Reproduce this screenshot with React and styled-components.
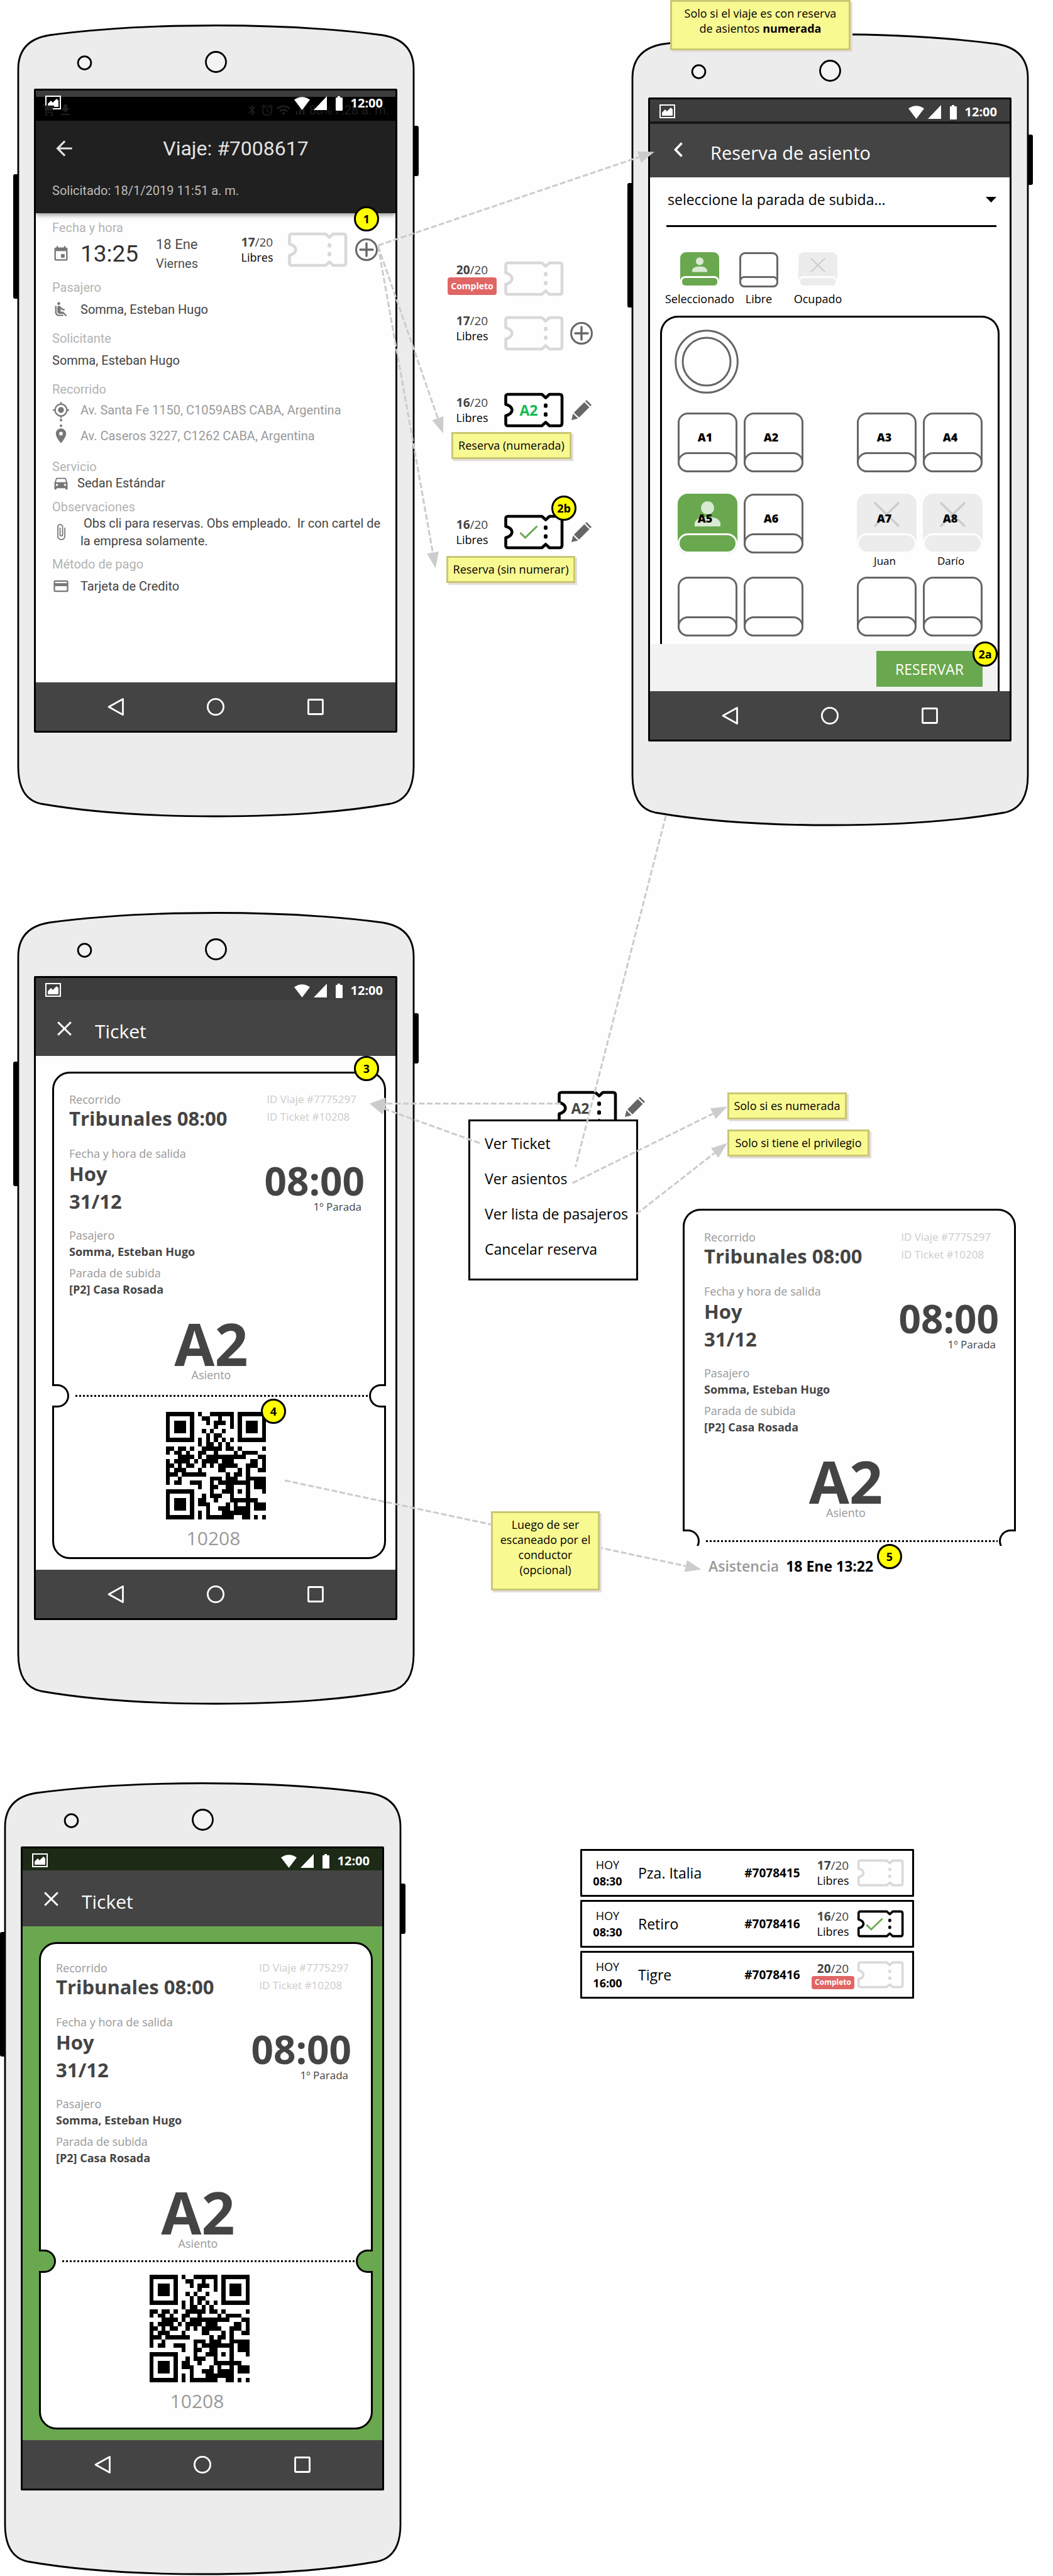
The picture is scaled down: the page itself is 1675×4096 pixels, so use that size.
import React from "react";
import styled, { createGlobalStyle, css } from "styled-components";
import {
  MdEvent,
  MdAirlineSeatReclineNormal,
  MdMyLocation,
  MdPlace,
  MdDirectionsCar,
  MdAttachFile,
  MdCreditCard,
  MdArrowBack,
  MdBluetooth,
  MdAlarm,
  MdWifi,
  MdSignalCellularAlt,
  MdFileDownload,
  MdShoppingCart,
} from "react-icons/md";

const GREEN = "#6aa84f";
const INK = "#444444";
const SANS = '"Open Sans", "Noto Sans", sans-serif';
const ROBOTO = 'Roboto, "Noto Sans", sans-serif';

const GlobalStyle = createGlobalStyle`
  *, *::before, *::after { box-sizing: border-box; }
  body { margin: 0; background: #fefefe; font-family: ${SANS}; color: #000; }
  button, select { font: inherit; color: inherit; margin: 0; padding: 0; border: 0; background: none; }
  h1, h2, p, ul, dl, dd, dt { margin: 0; padding: 0; font-weight: inherit; font-size: inherit; }
  ul { list-style: none; }
  svg { display: block; }
`;

/* ---------- board ---------- */

const Board = styled.main`
  position: relative;
  padding-bottom: 1px;
`;

const Section = styled.section`
  display: grid;
  align-items: start;
  padding: ${(p) => p.$pad};
  grid-template-columns: ${(p) => p.$cols};
`;

const Overlay = styled.svg`
  position: absolute;
  inset: 0;
  width: 100%;
  height: 100%;
  z-index: 1;
  pointer-events: none;
`;

const Note = styled.p`
  position: relative;
  z-index: 2;
  width: ${(p) => p.$w}px;
  min-height: ${(p) => p.$h || 43}px;
  margin-left: ${(p) => p.$left || 0}px;
  margin-top: ${(p) => p.$top || 0}px;
  padding: 6px 0;
  border: 3px solid #c9c772;
  background: #f9f992;
  box-shadow: 3px 3px 0 #e5dcdf;
  font-size: 18px;
  line-height: 24px;
  text-align: center;
  white-space: nowrap;
`;

const Badge = styled.span`
  position: absolute;
  z-index: 3;
  left: ${(p) => p.$x}px;
  top: ${(p) => p.$y}px;
  display: grid;
  place-items: center;
  width: 40px;
  height: 40px;
  border: 3px solid #000;
  border-radius: 50%;
  background: #ffff00;
  color: #000;
  font-size: 18px;
  font-weight: 700;
  line-height: 20px;
`;

function Link({ from, to, head = true }) {
  const dx = to[0] - from[0];
  const dy = to[1] - from[1];
  const len = Math.hypot(dx, dy);
  const ux = dx / len;
  const uy = dy / len;
  const bx = to[0] - ux * 32;
  const by = to[1] - uy * 32;
  const end = head ? [bx, by] : to;
  return (
    <g>
      <line x1={from[0]} y1={from[1]} x2={end[0]} y2={end[1]} stroke="#cccccc" strokeWidth="3.8" strokeDasharray="11.500 4.500" />
      {head && (
        <polygon
          points={`${to[0]},${to[1]} ${bx - uy * 12},${by + ux * 12} ${bx + uy * 12},${by - ux * 12}`}
          fill="#cccccc"
        />
      )}
    </g>
  );
}

function Links() {
  return (
    <Overlay viewBox="0 0 2108 5154" preserveAspectRatio="none" aria-hidden="true">
      <Link from={[757, 491]} to={[1310, 304]} />
      <Link from={[757, 493]} to={[887, 867]} />
      <Link from={[757, 493]} to={[872, 1137]} />
      <Link from={[1333, 1632]} to={[1152, 2335]} head={false} />
      <Link from={[1122, 2208]} to={[740, 2208]} />
      <Link from={[960, 2287]} to={[740, 2208]} />
      <Link from={[1146, 2367]} to={[1456, 2214]} />
      <Link from={[1274, 2429]} to={[1456, 2287]} />
      <Link from={[570, 2962]} to={[1404, 3140]} />
    </Overlay>
  );
}

/* ---------- phone ---------- */

const PhoneBox = styled.article`
  position: relative;
  height: 1261px;
  margin-top: ${(p) => p.$top || 0}px;
  padding: 102px 34px 135px 33px;
`;

const Frame = styled.svg`
  position: absolute;
  inset: 0;
  width: 100%;
  height: 100%;
`;

const Screen = styled.div`
  position: relative;
  display: flex;
  flex-direction: column;
  height: 1024px;
  border: 3px solid #000;
  border-radius: 2px;
  background: ${(p) => p.$bg || "#fefefe"};
  overflow: hidden;
`;

const StatusBar = styled.div`
  position: relative;
  display: flex;
  align-items: flex-start;
  height: ${(p) => (p.$tall ? 48 : 35)}px;
  padding: 8px 20px 0 15px;
  background: ${(p) => p.$bg || "#3d3d3d"};
  color: #fff;
`;

const StatusRight = styled.div`
  position: relative;
  display: flex;
  align-items: center;
  gap: 6px;
  margin-left: auto;
  height: 24px;
`;

const Clock = styled.time`
  font-size: 20px;
  font-weight: 700;
  line-height: 24px;
`;

const Ghost = styled.div`
  position: absolute;
  left: 10px;
  right: 10px;
  bottom: 5px;
  display: flex;
  align-items: center;
  gap: 3px;
  color: #1f1f1f;
  font-family: ${ROBOTO};
  font-size: 20px;
  line-height: 24px;
`;

const GhostSpacer = styled.span`
  flex: 1;
`;

const AppBar = styled.header`
  display: flex;
  align-items: center;
  height: 89px;
  padding-top: 9px;
  background: #444444;
  color: #fff;
  ${(p) =>
    p.$ruled &&
    css`
      border-top: 4px solid #161616;
      padding-top: 5px;
    `}
`;

const BarButton = styled.button`
  display: grid;
  place-items: center;
  width: 90px;
  height: 80px;
  padding-bottom: 8px;
`;

const BarTitle = styled.h1`
  padding: 2px 0 0 ${(p) => (p.$wide ? 4 : 6)}px;
  font-size: ${(p) => (p.$wide ? 30 : 29)}px;
  line-height: 40px;
`;

const NavBar = styled.nav`
  display: flex;
  justify-content: center;
  align-items: center;
  gap: 131px;
  flex: none;
  height: 77px;
  background: #444444;
`;

const NavButton = styled.button`
  width: 28px;
  height: 28px;
`;

function PhoneFrame() {
  return (
    <Frame viewBox="0 0 645 1261" preserveAspectRatio="none" aria-hidden="true">
      <rect x="0" y="238" width="12" height="198" rx="3" />
      <rect x="633" y="161" width="12" height="80" rx="3" />
      <path
        d="M8 71 C8 38 27 22 57 17 C140 6 230 1.5 322.5 1.5 C415 1.5 505 6 588 17 C618 22 637 38 637 71 V1180 C637 1215 624 1234 600 1239 C515 1254 420 1259 322.5 1259 C225 1259 130 1254 44 1239 C21 1234 8 1215 8 1180 Z"
        fill="#ececec"
        stroke="#000"
        strokeWidth="2.8"
      />
      <circle cx="113.500" cy="61" r="10.400" fill="#fefefe" fillOpacity="0.4" stroke="#000" strokeWidth="2.8" />
      <circle cx="322.500" cy="59.500" r="16" fill="#fefefe" fillOpacity="0.4" stroke="#000" strokeWidth="2.8" />
    </Frame>
  );
}

function StatusIcons() {
  return (
    <>
      <svg width="25" height="22" viewBox="0 0 25 22" aria-hidden="true">
        <rect x="1" y="1" width="23" height="20" fill="none" stroke="#fff" strokeWidth="2" />
        <path d="M4 18 V13 L9 8 L12 11 L18 5 L21 8 V18 Z" fill="#fff" />
      </svg>
      <StatusRight>
        <svg width="25" height="21" viewBox="0 0 25 21" aria-hidden="true">
          <path d="M0 4.500 Q12.500 -4 25 4.500 L12.500 21 Z" fill="#fff" />
        </svg>
        <svg width="21" height="22" viewBox="0 0 21 22" aria-hidden="true">
          <path d="M0 22 L21 0 V22 Z" fill="#fff" />
        </svg>
        <svg width="26" height="23" viewBox="0 0 26 23" aria-hidden="true">
          <path d="M11 0 H15 V2 H18 Q19 2 19 3 V22 Q19 23 18 23 H9 Q8 23 8 22 V3 Q8 2 9 2 H11 Z" fill="#fff" />
        </svg>
        <Clock>12:00</Clock>
      </StatusRight>
    </>
  );
}

function AndroidNav() {
  return (
    <NavBar>
      <NavButton aria-label="Atrás">
        <svg width="28" height="28" viewBox="0 0 28 28">
          <path d="M3 14 L25.500 1.500 V26.500 Z" fill="none" stroke="#fff" strokeWidth="2.8" strokeLinejoin="round" />
        </svg>
      </NavButton>
      <NavButton aria-label="Inicio">
        <svg width="28" height="28" viewBox="0 0 28 28">
          <circle cx="14" cy="14" r="12.600" fill="none" stroke="#fff" strokeWidth="2.8" />
        </svg>
      </NavButton>
      <NavButton aria-label="Recientes">
        <svg width="28" height="28" viewBox="0 0 28 28">
          <rect x="2.500" y="2.500" width="23" height="23" rx="1" fill="none" stroke="#fff" strokeWidth="2.8" />
        </svg>
      </NavButton>
    </NavBar>
  );
}

/* ---------- small drawings ---------- */

function TicketIcon({ color = "#d9d9d9", width = 96, height = 56 }) {
  return (
    <svg width={width} height={height} viewBox="0 0 96 56" preserveAspectRatio="none" aria-hidden="true">
      <path
        d="M7 3 H61 L67 8.500 L73 3 H89 Q93 3 93 7 V49 Q93 53 89 53 H73 L67 47.500 L61 53 H7 Q3.500 53 3.500 49.500 V37 Q13 34.500 13.500 28 Q13 21.500 3.500 19 V6.500 Q3.500 3 7 3 Z"
        fill="none"
        stroke={color}
        strokeWidth="4.6"
        strokeLinejoin="round"
      />
      <rect x="64" y="17.500" width="6" height="7" rx="2.5" fill={color} />
      <rect x="64" y="31.500" width="6" height="7" rx="2.5" fill={color} />
    </svg>
  );
}

function CheckMark({ width = 30, height = 22 }) {
  return (
    <svg width={width} height={height} viewBox="0 0 30 22" aria-hidden="true">
      <path d="M1.500 12 L9.500 20 L28.500 1.500" fill="none" stroke={GREEN} strokeWidth="3" />
    </svg>
  );
}

function Pencil() {
  return (
    <svg width="32" height="32" viewBox="0 0 32 32" aria-hidden="true">
      <g fill="#666666">
        <path d="M0 32 L2.500 21.500 L10.500 29.500 Z" />
        <path d="M4 20 L20.500 3.500 L28.500 11.500 L12 28 Z" />
        <path d="M22 2 L24 0 L32 8 L30 10 Z" />
      </g>
    </svg>
  );
}

function PlusCircle() {
  return (
    <svg width="36" height="36" viewBox="0 0 36 36" aria-hidden="true">
      <circle cx="18" cy="18" r="16.500" fill="none" stroke="#666" strokeWidth="3" />
      <path d="M18 8 V28 M8 18 H28" stroke="#666" strokeWidth="3.400" strokeLinecap="round" />
    </svg>
  );
}

function CrossIcon() {
  return (
    <svg width="23" height="23" viewBox="0 0 23 23" aria-hidden="true">
      <path d="M1.200 1.200 L21.800 21.800 M21.800 1.200 L1.200 21.800" stroke="#fff" strokeWidth="3" />
    </svg>
  );
}

function ChevronLeft() {
  return (
    <svg width="14" height="24" viewBox="0 0 14 24" aria-hidden="true">
      <path d="M12.500 1.500 L2.500 12 L12.500 22.500" fill="none" stroke="#fff" strokeWidth="3.6" />
    </svg>
  );
}

const QR = [
  "1111111010011111101111111",
  "1000001001100100101000001",
  "1011101000101110101011101",
  "1011101000001000101011101",
  "1011101001010010001011101",
  "1000001000101100001000001",
  "1111111010101010101111111",
  "0000000010110101000000000",
  "1101101001111101101000001",
  "1011010011001000010111100",
  "0001111010111111111100011",
  "1011110101111011100001101",
  "1101011001010111110011101",
  "1011100010000110001010011",
  "1110111111000001011010000",
  "1001000000011101110011111",
  "1011001110010111111110111",
  "0000000010011001100010111",
  "1111111000010011101010001",
  "1000001001011100100010000",
  "1011101011001000111111100",
  "1011101011100001010010111",
  "1011101000100111011110111",
  "1000001010100011111110000",
  "1111111010111111100110101",
];

const QR_PATH = QR.map((row, y) =>
  [...row].map((c, x) => (c === "1" ? `M${x} ${y}h1v1h-1z` : "")).join("")
).join("");

function QrCode() {
  return (
    <svg width="159" height="171" viewBox="0 0 25 25" preserveAspectRatio="none" role="img" aria-label="QR 10208" shapeRendering="crispEdges">
      <path d={QR_PATH} />
    </svg>
  );
}

/* ---------- seats availability ---------- */

const Count = styled.div`
  display: flex;
  flex-direction: column;
  align-items: center;
  width: ${(p) => p.$w || 82}px;
  font-size: 18px;
  line-height: 24px;
  padding-bottom: ${(p) => p.$lift || 0}px;
`;

const Ratio = styled.span`
  color: ${INK};
  font-size: 19px;
`;

const FullTag = styled.span`
  display: grid;
  place-items: center;
  width: ${(p) => (p.$small ? 68 : 78)}px;
  height: ${(p) => (p.$small ? 21 : 28)}px;
  border-radius: 4px;
  background: #e06666;
  color: #fff;
  font-size: ${(p) => (p.$small ? 12 : 14)}px;
  font-weight: 700;
  line-height: 16px;
`;

const TicketMark = styled.div`
  position: relative;
  width: ${(p) => p.$w || 96}px;
  height: ${(p) => p.$h || 56}px;
`;

const TicketLabel = styled.span`
  position: absolute;
  inset: 0 ${(p) => p.$right || 16}px 0 0;
  display: grid;
  place-items: center;
  color: ${(p) => p.$color || INK};
  font-size: 23px;
  font-weight: 700;
  line-height: 1;
`;

const StateRow = styled.li`
  display: flex;
  align-items: center;
  height: 56px;
  margin-top: ${(p) => p.$top || 0}px;
`;

const StateAction = styled.button`
  display: grid;
  place-items: center;
  width: 36px;
  height: 36px;
  margin-left: 10px;
`;

const StateList = styled.ul`
  padding: 415px 0 0 44px;
`;

const StateTicket = styled.div`
  margin-left: 9px;
`;

function SeatCount({ taken, full, small, ...rest }) {
  return (
    <Count {...rest}>
      <Ratio>
        <strong>{taken}</strong>/20
      </Ratio>
      {full ? <FullTag $small={small}>Completo</FullTag> : <span>Libres</span>}
    </Count>
  );
}

function States() {
  return (
    <StateList>
      <StateRow>
        <SeatCount taken="20" full />
        <StateTicket>
          <TicketIcon />
        </StateTicket>
      </StateRow>
      <StateRow $top={31}>
        <SeatCount taken="17" $lift={16} />
        <StateTicket>
          <TicketIcon />
        </StateTicket>
        <StateAction aria-label="Agregar reserva">
          <PlusCircle />
        </StateAction>
      </StateRow>
      <StateRow $top={66}>
        <SeatCount taken="16" />
        <StateTicket>
          <TicketMark>
            <TicketIcon color="#000" />
            <TicketLabel $color="#12bb52">A2</TicketLabel>
          </TicketMark>
        </StateTicket>
        <StateAction aria-label="Editar reserva">
          <Pencil />
        </StateAction>
      </StateRow>
      <li>
        <Note as="div" $w={191} $left={8} $top={7}>
          Reserva (numerada)
        </Note>
      </li>
      <StateRow $top={88}>
        <SeatCount taken="16" />
        <StateTicket>
          <TicketMark>
            <TicketIcon color="#000" />
            <TicketLabel>
              <CheckMark />
            </TicketLabel>
            <Badge $x={76} $y={-30}>
              2b
            </Badge>
          </TicketMark>
        </StateTicket>
        <StateAction aria-label="Editar reserva">
          <Pencil />
        </StateAction>
      </StateRow>
      <li>
        <Note as="div" $w={205} $top={10}>
          Reserva (sin numerar)
        </Note>
      </li>
    </StateList>
  );
}

/* ---------- trip detail screen ---------- */

const TripHeader = styled.header`
  position: relative;
  flex: none;
  height: 147px;
  background: #202020;
  color: #e2e2e2;
  font-family: ${ROBOTO};
  box-shadow: 0 2px 8px rgba(0, 0, 0, 0.5);
`;

const TripTop = styled.div`
  display: flex;
  align-items: center;
  height: 88px;
  padding: 0 0 0 26px;
`;

const TripTitle = styled.h1`
  flex: 1;
  font-size: 32px;
  line-height: 40px;
  text-align: center;
`;

const TripMeta = styled.p`
  padding: 11px 26px 0;
  color: #bdbdbd;
  font-size: 20px;
  line-height: 24px;
`;

const TripBody = styled.dl`
  flex: 1;
  padding: 11px 26px 0;
  font-family: ${ROBOTO};
  font-size: 20px;
  line-height: 24px;
`;

const FieldLabel = styled.dt`
  margin-top: ${(p) => p.$top || 0}px;
  color: #b3b3b3;
`;

const FieldValue = styled.dd`
  display: flex;
  align-items: center;
  gap: ${(p) => p.$gap || 17}px;
  margin-top: ${(p) => p.$top || 0}px;
  min-height: 24px;
  line-height: ${(p) => p.$lh || 24}px;
  white-space: nowrap;
  color: ${(p) => (p.$soft ? "#9a9a9a" : "#444444")};
  > svg {
    flex: none;
    margin-top: -4px;
    margin-bottom: -4px;
    color: #777777;
  }
`;

const DateRow = styled.dd`
  display: flex;
  align-items: center;
  height: 60px;
  color: #4d4d4d;
  > svg {
    color: #777777;
  }
`;

const Hour = styled.time`
  width: 137px;
  padding-left: 17px;
  color: #333;
  font-size: 37px;
  line-height: 40px;
`;

const Day = styled.div`
  font-size: 20px;
  line-height: 30px;
  strong {
    display: block;
    font-size: 22px;
    font-weight: 400;
  }
`;

const Availability = styled.div`
  display: flex;
  align-items: center;
  gap: 12px;
  margin: 0 2px 14px auto;
  font-family: ${SANS};
  color: #000;
`;

const Stops = styled.div`
  position: relative;
`;

const StopDots = styled.span`
  position: absolute;
  left: 12px;
  top: 26px;
  width: 4px;
  height: 4px;
  border-radius: 50%;
  background: #777;
  box-shadow: 0 9px 0 #777;
`;

function TripPhone() {
  return (
    <PhoneBox $top={39}>
      <PhoneFrame />
      <Screen>
        <StatusBar $tall $bg="linear-gradient(#3d3d3d 10px, #000 10px)">
          <Ghost aria-hidden="true">
            <MdShoppingCart size={22} />
            <MdFileDownload size={24} />
            <GhostSpacer />
            <MdBluetooth size={20} />
            <MdAlarm size={22} />
            <MdWifi size={24} />
            <MdSignalCellularAlt size={22} />
            <span>88%</span>
            <span>7:28 a. m.</span>
          </Ghost>
          <StatusIcons />
        </StatusBar>
        <TripHeader>
          <TripTop>
            <button aria-label="Volver">
              <MdArrowBack size={38} />
            </button>
            <TripTitle>Viaje: #7008617</TripTitle>
          </TripTop>
          <TripMeta>Solicitado: 18/1/2019 11:51 a. m.</TripMeta>
        </TripHeader>
        <TripBody>
          <FieldLabel>Fecha y hora</FieldLabel>
          <DateRow>
            <MdEvent size={28} />
            <Hour>13:25</Hour>
            <Day>
              <strong>18 Ene</strong>
              Viernes
            </Day>
            <Availability>
              <SeatCount taken="17" $w={72} />
              <TicketIcon />
              <button aria-label="Agregar reserva">
                <PlusCircle />
              </button>
            </Availability>
          </DateRow>
          <FieldLabel $top={11}>Pasajero</FieldLabel>
          <FieldValue $top={11}>
            <MdAirlineSeatReclineNormal size={28} />
            Somma, Esteban Hugo
          </FieldValue>
          <FieldLabel $top={22}>Solicitante</FieldLabel>
          <FieldValue $top={11}>Somma, Esteban Hugo</FieldValue>
          <FieldLabel $top={22}>Recorrido</FieldLabel>
          <Stops>
            <StopDots />
            <FieldValue $top={9} $soft>
              <MdMyLocation size={28} />
              Av. Santa Fe 1150, C1059ABS CABA, Argentina
            </FieldValue>
            <FieldValue $top={17} $soft>
              <MdPlace size={28} />
              Av. Caseros 3227, C1262 CABA, Argentina
            </FieldValue>
          </Stops>
          <FieldLabel $top={25}>Servicio</FieldLabel>
          <FieldValue $top={2} $gap={12}>
            <MdDirectionsCar size={28} />
            Sedan Estándar
          </FieldValue>
          <FieldLabel $top={14}>Observaciones</FieldLabel>
          <FieldValue $lh={28}>
            <MdAttachFile size={28} />
            <span>
              &nbsp;Obs cli para reservas. Obs empleado. &nbsp;Ir con cartel de
              <br />
              la empresa solamente.
            </span>
          </FieldValue>
          <FieldLabel $top={11}>Método de pago</FieldLabel>
          <FieldValue $top={11}>
            <MdCreditCard size={28} />
            Tarjeta de Credito
          </FieldValue>
        </TripBody>
        <AndroidNav />
      </Screen>
      <Badge $x={542} $y={289}>
        1
      </Badge>
    </PhoneBox>
  );
}

/* ---------- seat booking screen ---------- */

const StopField = styled.label`
  position: relative;
  display: block;
  flex: none;
  margin: 0 21px 0 26px;
  height: 79px;
  border-bottom: 3px solid #000;
  svg {
    position: absolute;
    right: 0;
    top: 31px;
  }
`;

const StopSelect = styled.select`
  appearance: none;
  width: 100%;
  height: 70px;
  padding: 0 24px 0 2px;
  font-size: 23px;
  line-height: 32px;
`;

const Legend = styled.ul`
  display: grid;
  flex: none;
  grid-template-columns: 112px 76px 112px;
  margin: 40px 0 0 23px;
  font-size: 18px;
  line-height: 24px;
  text-align: center;
`;

const LegendItem = styled.li`
  display: flex;
  flex-direction: column;
  align-items: center;
  gap: 6px;
`;

const seatTone = {
  free: { line: "#666666", fill: "#fefefe", seam: "#666666" },
  mine: { line: GREEN, fill: GREEN, seam: "#fefefe" },
  busy: { line: "#ececec", fill: "#ececec", seam: "#fefefe" },
};

const SeatShape = styled.span`
  display: flex;
  flex-direction: column;
  width: ${(p) => (p.$small ? 62 : 95)}px;
  height: ${(p) => (p.$small ? 56 : 95)}px;
  border: 3px solid ${(p) => seatTone[p.$tone].line};
  border-radius: ${(p) => (p.$small ? 9 : 16)}px;
  background: ${(p) => seatTone[p.$tone].fill};
`;

const SeatBack = styled.span`
  position: relative;
  flex: 1;
  display: grid;
  place-items: center;
  padding: 12px 8px 0 0;
  font-size: 18px;
  font-weight: 700;
  line-height: 24px;
  svg {
    position: absolute;
    left: 0;
    top: 0;
    width: 100%;
    height: 100%;
  }
  b {
    position: relative;
  }
`;

const Cushion = styled.span`
  height: ${(p) => (p.$small ? 18 : 32)}px;
  margin: 0 -3px -3px;
  border: 3px solid ${(p) => seatTone[p.$tone].seam};
  border-radius: ${(p) => (p.$small ? 8 : 16)}px;
  background: ${(p) => seatTone[p.$tone].fill};
`;

function Seat({ tone = "free", label, small }) {
  return (
    <SeatShape $tone={tone} $small={small}>
      <SeatBack>
        {tone === "mine" && (
          <svg viewBox="0 0 89 60" aria-hidden="true">
            <circle cx="44.500" cy="19.500" r="10.500" fill="#d9ead3" />
            <path d="M24 49 V44 Q26 34 44.500 34 Q63 34 65 44 V49 Z" fill="#d9ead3" />
          </svg>
        )}
        {tone === "busy" && (
          <svg viewBox="0 0 89 60" aria-hidden="true">
            <path d="M26 12 L63 48 M63 12 L26 48" stroke="#cccccc" strokeWidth="3.600" strokeLinecap="round" />
          </svg>
        )}
        {label && <b>{label}</b>}
      </SeatBack>
      <Cushion $tone={tone} $small={small} />
    </SeatShape>
  );
}

const Bus = styled.div`
  display: flex;
  flex-direction: column;
  flex: 1;
  margin: 15px 16px 0;
  padding-top: 19px;
  border: 3px solid #000;
  border-bottom: 0;
  border-radius: 28px 28px 0 0;
`;

const Wheel = styled.svg`
  flex: none;
  margin: 0 0 28px 20px;
`;

const SeatRow = styled.div`
  display: grid;
  grid-template-columns: 95px 95px 1fr 95px 95px;
  column-gap: 10px;
  padding: 0 24px 0 25px;
  margin-bottom: ${(p) => p.$gap || 0}px;
`;

const SeatButton = styled.button`
  display: flex;
  flex-direction: column;
  align-items: center;
  grid-column: ${(p) => p.$col};
  font-size: 17px;
  line-height: 24px;
  text-align: left;
`;

const SeatOwner = styled.span`
  padding-right: 6px;
`;

const BookBar = styled.div`
  display: flex;
  justify-content: flex-end;
  align-items: center;
  height: 75px;
  margin: auto 2px 0 -18px;
  padding: 4px 22px 0 0;
  background: #f2f2f2;
`;

const BookButton = styled.button`
  width: 169px;
  height: 57px;
  background: ${GREEN};
  color: #fff;
  font-size: 23px;
  line-height: 32px;
`;

const SEATS = [
  { gap: 34, seats: [["A1"], ["A2"], ["A3"], ["A4"]] },
  { gap: 13, seats: [["A5", "mine"], ["A6"], ["A7", "busy", "Juan"], ["A8", "busy", "Darío"]] },
  { gap: 0, seats: [[""], [""], [""], [""]] },
];
const SEAT_COLS = [1, 2, 4, 5];

function BookingPhone() {
  return (
    <PhoneBox $top={53}>
      <PhoneFrame />
      <Screen>
        <StatusBar>
          <StatusIcons />
        </StatusBar>
        <AppBar $ruled>
          <BarButton aria-label="Volver">
            <ChevronLeft />
          </BarButton>
          <BarTitle>Reserva de asiento</BarTitle>
        </AppBar>
        <StopField>
          <StopSelect aria-label="Parada de subida" defaultValue="">
            <option value="">seleccione la parada de subida...</option>
          </StopSelect>
          <svg width="17" height="9" viewBox="0 0 17 9" aria-hidden="true">
            <path d="M0 0 H17 L8.500 9 Z" />
          </svg>
        </StopField>
        <Legend>
          <LegendItem>
            <Seat tone="mine" small />
            Seleccionado
          </LegendItem>
          <LegendItem>
            <Seat small />
            Libre
          </LegendItem>
          <LegendItem>
            <Seat tone="busy" small />
            Ocupado
          </LegendItem>
        </Legend>
        <Bus>
          <Wheel width="102" height="104" viewBox="0 0 102 104" aria-hidden="true">
            <g fill="none" stroke="#666" strokeWidth="3">
              <circle cx="51" cy="51" r="49.300" />
              <circle cx="51" cy="51" r="38" />
            </g>
          </Wheel>
          {SEATS.map((row, i) => (
            <SeatRow key={i} $gap={row.gap}>
              {row.seats.map(([label, tone, owner], j) => (
                <SeatButton key={j} $col={SEAT_COLS[j]} aria-label={label ? undefined : "Asiento libre"}>
                  <Seat label={label} tone={tone} />
                  {owner && <SeatOwner>{owner}</SeatOwner>}
                </SeatButton>
              ))}
            </SeatRow>
          ))}
          <BookBar>
            <BookButton>RESERVAR</BookButton>
          </BookBar>
        </Bus>
        <AndroidNav />
      </Screen>
      <Badge $x={549} $y={967}>
        2a
      </Badge>
    </PhoneBox>
  );
}

const BookingColumn = styled.div`
  position: relative;
`;

const TopNote = styled.div`
  position: absolute;
  left: 68px;
  top: 0;
  z-index: 2;
`;

/* ---------- ticket ---------- */

const Card = styled.div`
  border: 3px solid #000;
  border-radius: ${(p) => (p.$cut ? "28px 28px 0 0" : "28px")};
  border-bottom-width: ${(p) => (p.$cut ? 0 : 3)}px;
  background: #fefefe;
  color: ${INK};
  font-size: 18px;
`;

const CardTop = styled.div`
  padding: ${(p) => p.$top}px ${(p) => 31 - p.$shift}px 0 ${(p) => 24 + p.$shift}px;
`;

const CardRow = styled.div`
  display: flex;
  justify-content: space-between;
  margin-bottom: ${(p) => p.$gap}px;
`;

const Label = styled.p`
  color: #999999;
  line-height: 20px;
`;

const Route = styled.p`
  font-size: 31px;
  font-weight: 700;
  line-height: 40px;
`;

const When = styled.p`
  font-size: 31px;
  font-weight: 700;
  line-height: 44px;
`;

const Ids = styled.div`
  margin: -4px ${(p) => p.$right}px 0 0;
  color: #cccccc;
  font-size: 17px;
  line-height: 28px;
`;

const Departure = styled.div`
  padding-top: 28px;
  text-align: right;
`;

const BigHour = styled.p`
  font-size: 62px;
  font-weight: 700;
  line-height: 50px;
`;

const StopName = styled.p`
  padding: 7px 5px 0 0;
  font-size: 17px;
  line-height: 20px;
`;

const Strong = styled.p`
  font-weight: 700;
  line-height: 32px;
  margin-bottom: ${(p) => p.$gap || 0}px;
`;

const SeatNumber = styled.div`
  margin-top: 30px;
  padding-right: 18px;
  text-align: center;
`;

const BigSeat = styled.p`
  font-size: 93px;
  font-weight: 700;
  line-height: 80px;
`;

const Tear = styled.div`
  display: flex;
  margin: ${(p) => p.$top}px -3px 0;
  height: ${(p) => (p.$cut ? 26 : 37)}px;
  overflow: hidden;
`;

const Notch = styled.span`
  flex: none;
  width: 27px;
  height: 37px;
  border: 3px solid #000;
  background: ${(p) => p.$bg};
  ${(p) =>
    p.$side === "left"
      ? "border-left: 0; border-radius: 0 19px 19px 0;"
      : "border-right: 0; border-radius: 19px 0 0 19px;"}
`;

const Dots = styled.span`
  flex: 1;
  height: 3px;
  margin: 17px 2px 0 10px;
  background: repeating-linear-gradient(90deg, #000 0 3px, transparent 3px 6px);
`;

const CardBottom = styled.div`
  display: flex;
  flex-direction: column;
  align-items: center;
  padding: ${(p) => p.$pad};
`;

const Code = styled.p`
  padding: 10px 8px 0 0;
  color: #999999;
  font-size: 30px;
  line-height: 40px;
`;

function Ticket({ variant = "full", back = "#fefefe" }) {
  const cut = variant === "cut";
  const tight = variant === "tight";
  return (
    <Card $cut={cut}>
      <CardTop $top={cut ? 32 : tight ? 28 : 31} $shift={cut ? 7 : 0}>
        <CardRow $gap={26}>
          <div>
            <Label>Recorrido</Label>
            <Route>Tribunales 08:00</Route>
          </div>
          <Ids $right={tight ? 4 : 13}>
            <p>ID Viaje #7775297</p>
            <p>ID Ticket #10208</p>
          </Ids>
        </CardRow>
        <CardRow $gap={22}>
          <div>
            <Label>Fecha y hora de salida</Label>
            <When>Hoy</When>
            <When>31/12</When>
          </div>
          <Departure>
            <BigHour>08:00</BigHour>
            <StopName>1º Parada</StopName>
          </Departure>
        </CardRow>
        <Label>Pasajero</Label>
        <Strong $gap={8}>Somma, Esteban Hugo</Strong>
        <Label>Parada de subida</Label>
        <Strong>[P2] Casa Rosada</Strong>
        <SeatNumber>
          <BigSeat>A2</BigSeat>
          <Label>Asiento</Label>
        </SeatNumber>
      </CardTop>
      <Tear $cut={cut} $top={cut ? 17 : tight ? 0 : 5}>
        <Notch $side="left" $bg={back} />
        <Dots />
        <Notch $side="right" $bg={back} />
      </Tear>
      {!cut && (
        <CardBottom $pad={tight ? "3px 20px 22px 0" : "7px 10px 10px 0"}>
          <QrCode />
          <Code>10208</Code>
        </CardBottom>
      )}
    </Card>
  );
}

const TicketArea = styled.div`
  flex: 1;
  padding: 25px 15px 0 26px;
`;

function TicketPhone({ green, children }) {
  const back = green ? GREEN : "#fefefe";
  return (
    <PhoneBox>
      <PhoneFrame />
      <Screen $bg={back}>
        <StatusBar $bg={green ? "#1c2a16" : undefined}>
          <StatusIcons />
        </StatusBar>
        <AppBar>
          <BarButton aria-label="Cerrar">
            <CrossIcon />
          </BarButton>
          <BarTitle $wide>Ticket</BarTitle>
        </AppBar>
        <TicketArea>
          <Ticket back={back} variant={green ? "tight" : "full"} />
        </TicketArea>
        <AndroidNav />
      </Screen>
      {children}
    </PhoneBox>
  );
}

/* ---------- menu ---------- */

const MenuColumn = styled.div`
  padding: 284px 0 0 79px;
`;

const MenuHead = styled.div`
  display: flex;
  gap: 12px;
  height: 46px;
  padding-left: 141px;
`;

const HeadPencil = styled.div`
  padding-top: 10px;
`;

const Menu = styled.ul`
  position: relative;
  width: 270px;
  padding: 7px 0 19px;
  border: 3px solid #000;
  background: #fefefe;
`;

const MenuItem = styled.button`
  display: block;
  width: 100%;
  height: 56px;
  padding-left: 23px;
  font-size: 23px;
  line-height: 32px;
  text-align: left;
  white-space: nowrap;
`;

const SideColumn = styled.div`
  padding-top: 287px;
`;

const SideNotes = styled.div`
  display: flex;
  flex-direction: column;
  gap: 16px;
  margin: 0 0 83px 71px;
`;

const Attendance = styled.p`
  position: relative;
  display: flex;
  gap: 11px;
  padding: 16px 0 0 41px;
  font-size: 23px;
  font-weight: 700;
  line-height: 32px;
`;

const AttendanceLabel = styled.span`
  color: #999999;
  font-weight: 600;
`;

/* ---------- trips table ---------- */

const TripTable = styled.table`
  grid-column: 3;
  width: 100%;
  margin-top: 101px;
  table-layout: fixed;
  border-collapse: separate;
  border-spacing: 0 5px;
  font-size: 18px;
  line-height: 26px;
`;

const Cell = styled.td`
  width: ${(p) => (p.$w ? `${p.$w}px` : "auto")};
  height: 76px;
  padding: ${(p) => p.$pad || "0"};
  border: solid #000;
  border-width: 3px 0;
  text-align: ${(p) => p.$align || "center"};
  font-size: ${(p) => p.$size || 18}px;
  font-weight: ${(p) => (p.$bold ? 700 : 400)};
  &:first-child {
    border-left-width: 3px;
    border-radius: 2px 0 0 2px;
  }
  &:last-child {
    border-right-width: 3px;
    border-radius: 0 2px 2px 0;
  }
  strong {
    display: ${(p) => (p.$stack ? "block" : "inline")};
  }
`;

const TRIPS = [
  { time: "08:30", name: "Pza. Italia", id: "#7078415", taken: "17" },
  { time: "08:30", name: "Retiro", id: "#7078416", taken: "16", booked: true },
  { time: "16:00", name: "Tigre", id: "#7078416", taken: "20", full: true },
];

function Trips() {
  return (
    <TripTable>
      <tbody>
        {TRIPS.map((t) => (
          <tr key={t.name}>
            <Cell $w={84} $stack>
              HOY
              <strong>{t.time}</strong>
            </Cell>
            <Cell $w={161} $align="left" $size={23} $pad="0 0 0 8px">
              {t.name}
            </Cell>
            <Cell $w={121} $size={19} $bold>
              {t.id}
            </Cell>
            <Cell $w={72}>
              <SeatCount taken={t.taken} full={t.full} small $w={72} />
            </Cell>
            <Cell $pad="0 0 0 2px">
              <TicketMark $w={75} $h={44}>
                <TicketIcon width={75} height={44} color={t.booked ? "#000" : "#d9d9d9"} />
                {t.booked && (
                  <TicketLabel $right={20}>
                    <CheckMark width={28} height={21} />
                  </TicketLabel>
                )}
              </TicketMark>
            </Cell>
          </tr>
        ))}
      </tbody>
    </TripTable>
  );
}

/* ---------- page ---------- */

export default function App() {
  return (
    <>
      <GlobalStyle />
      <Board>
        <Links />
        <Section $pad="0 32px 0 21px" $cols="minmax(0, 645fr) minmax(0, 332fr) minmax(0, 645fr)">
          <TripPhone />
          <States />
          <BookingColumn>
            <BookingPhone />
            <TopNote>
              <Note $w={287} $h={80}>
                Solo si el viaje es con reserva
                <br />
                de asientos <strong>numerada</strong>
              </Note>
            </TopNote>
          </BookingColumn>
        </Section>

        <Section $pad="136px 59px 0 21px" $cols="minmax(0, 645fr) minmax(0, 420fr) minmax(0, 530fr)">
          <TicketPhone>
            <Badge $x={542} $y={229}>
              3
            </Badge>
            <Badge $x={394} $y={774}>
              4
            </Badge>
          </TicketPhone>
          <MenuColumn>
            <MenuHead>
              <TicketMark>
                <TicketIcon color="#000" />
                <TicketLabel $right={22}>A2</TicketLabel>
              </TicketMark>
              <HeadPencil>
                <Pencil />
              </HeadPencil>
            </MenuHead>
            <Menu>
              {["Ver Ticket", "Ver asientos", "Ver lista de pasajeros", "Cancelar reserva"].map((t) => (
                <li key={t}>
                  <MenuItem>{t}</MenuItem>
                </li>
              ))}
            </Menu>
            <Note $w={173} $h={126} $left={36} $top={367}>
              Luego de ser
              <br />
              escaneado por el
              <br />
              conductor
              <br />
              (opcional)
            </Note>
          </MenuColumn>
          <SideColumn>
            <SideNotes>
              <Note $w={190}>Solo si es numerada</Note>
              <Note $w={226}>Solo si tiene el privilegio</Note>
            </SideNotes>
            <Ticket variant="cut" />
            <Attendance>
              <AttendanceLabel>Asistencia</AttendanceLabel>
              <span>18 Ene 13:22</span>
              <Badge $x={309} $y={-3}>
                5
              </Badge>
            </Attendance>
          </SideColumn>
        </Section>

        <Section $pad="123px 0 0" $cols="minmax(0, 645fr) minmax(0, 278fr) minmax(0, 531fr) minmax(0, 221fr)">
          <TicketPhone green />
          <Trips />
        </Section>
      </Board>
    </>
  );
}
